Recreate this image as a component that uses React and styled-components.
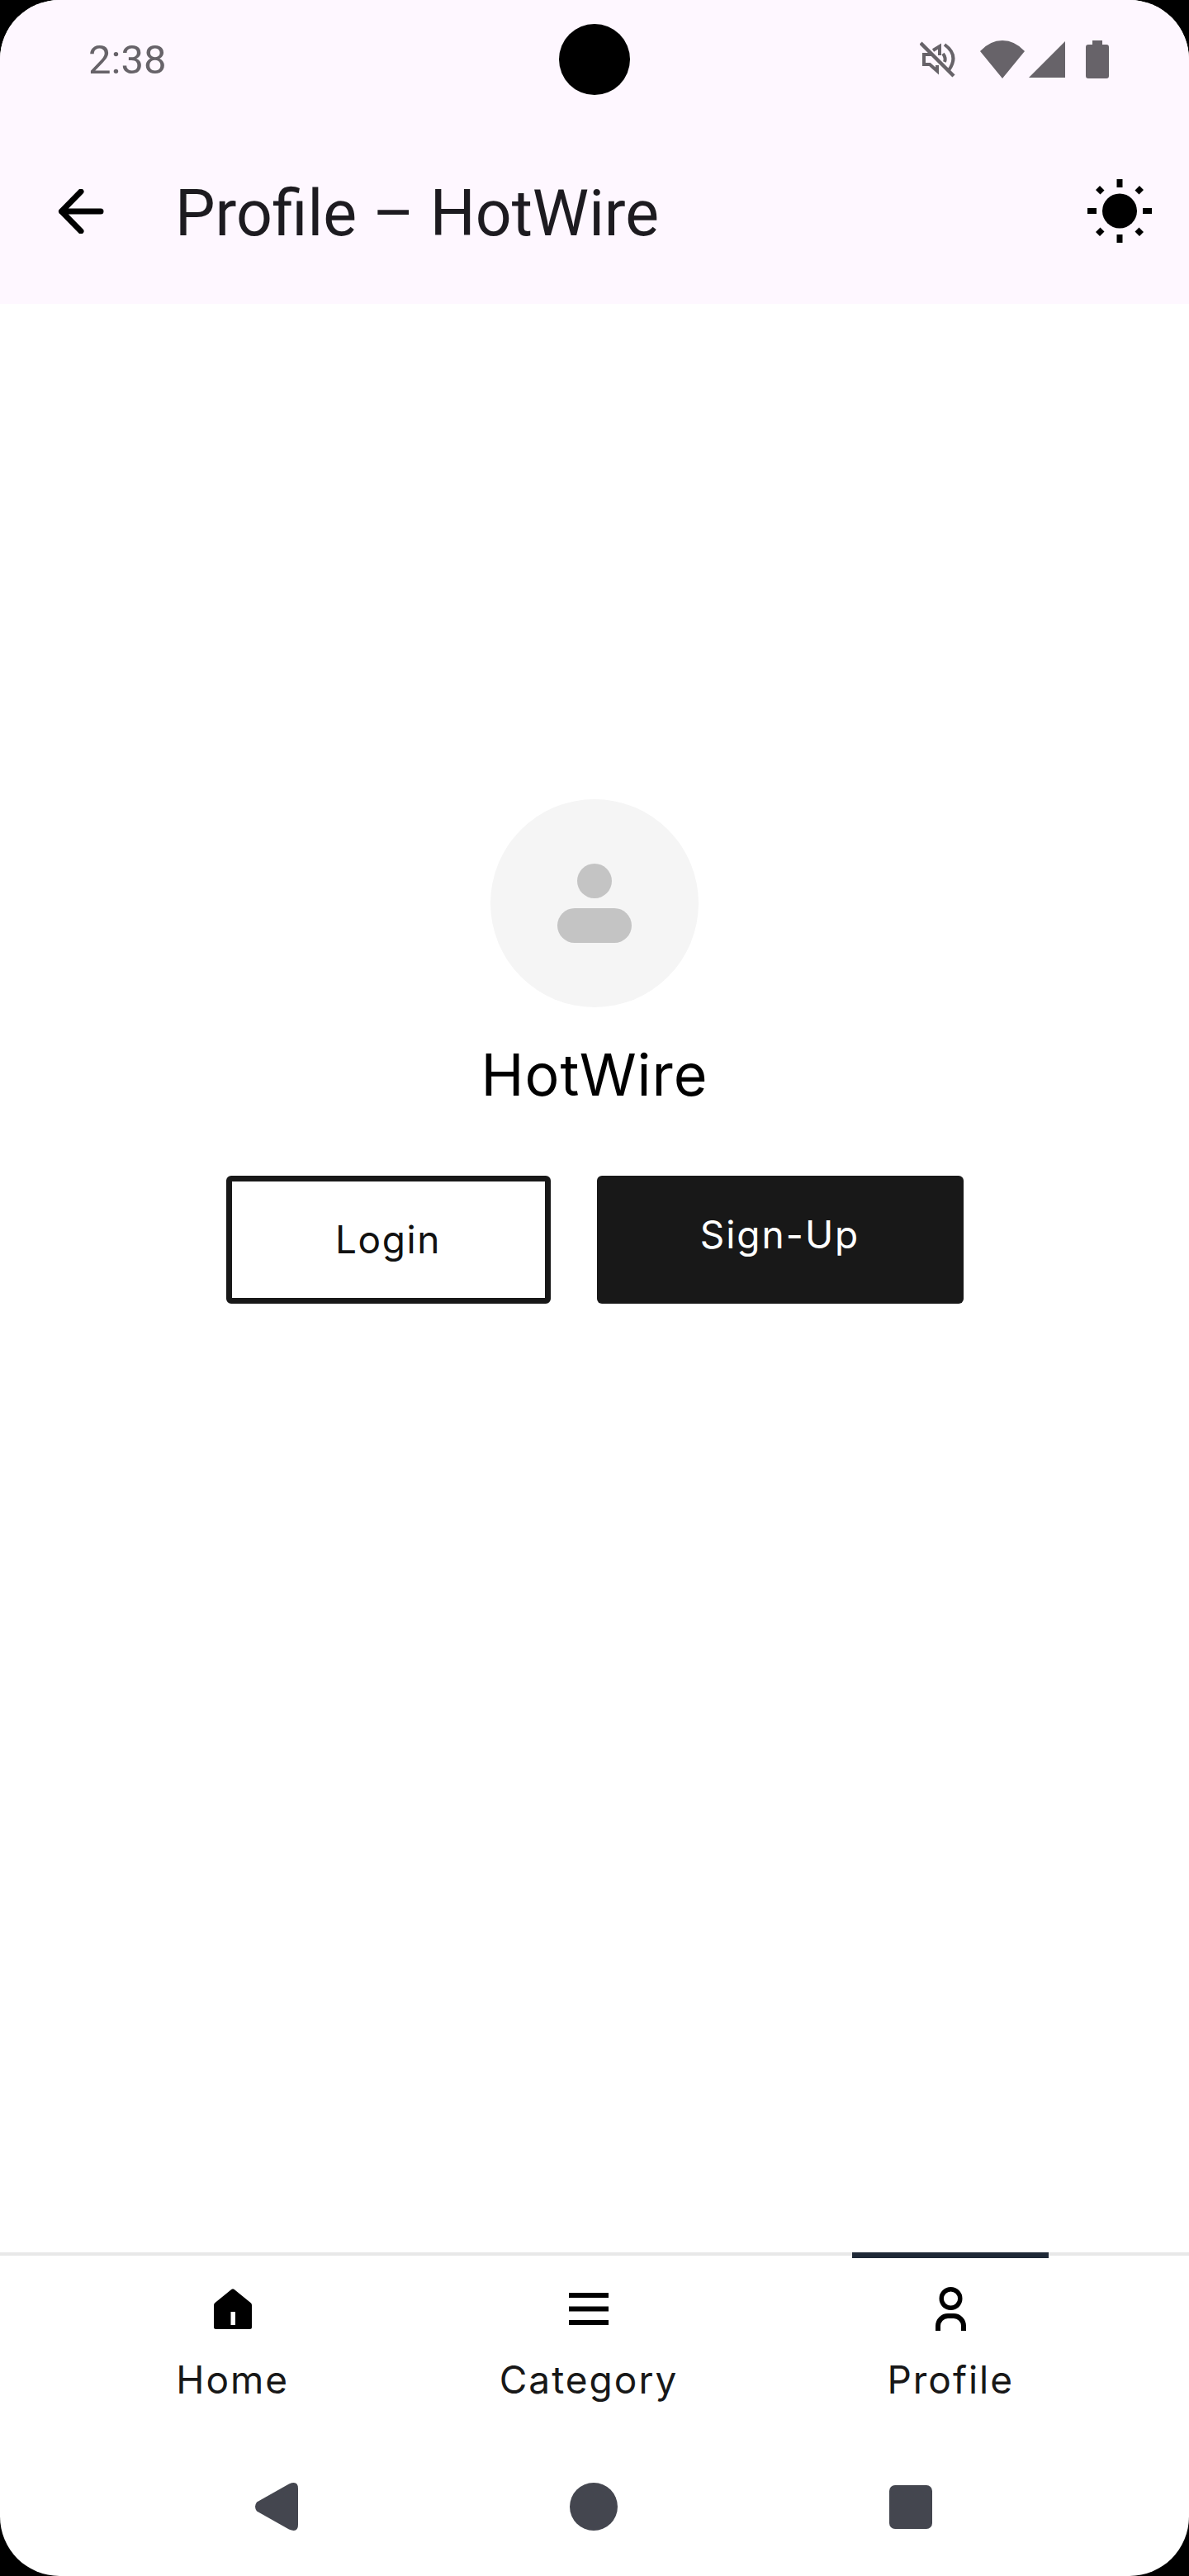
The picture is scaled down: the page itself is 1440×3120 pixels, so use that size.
import React from "react";
import styled, { createGlobalStyle } from "styled-components";

const GlobalStyle = createGlobalStyle`
  html, body {
    margin: 0;
    padding: 0;
    background: #000;
  }
`;

const tabs = [
  { label: "Home", width: 224, icon: <HomeIcon /> },
  { label: "Category", width: 299, icon: <MenuIcon /> },
  { label: "Profile", width: 238, icon: <PersonIcon />, active: true }
];

function HomeIcon() {
  return (
    <svg width="46" height="49" viewBox="0 0 46 49">
      <path
        fill="#000"
        fillRule="evenodd"
        d="M21.5 0.7 Q23 -0.3 24.5 0.7 L44.5 17 Q46 18 46 20 V46.5 Q46 49 43.5 49 H2.5 Q0 49 0 46.5 V20 Q0 18 1.5 17 Z M20.5 28 V44 H26 V28 Z"
      />
    </svg>
  );
}

function MenuIcon() {
  return (
    <svg width="48" height="39" viewBox="0 0 48 39">
      <path fill="#000" d="M0 0 H48 V6 H0 Z M0 16.5 H48 V22.5 H0 Z M0 33 H48 V39 H0 Z" />
    </svg>
  );
}

function PersonIcon() {
  return (
    <svg width="37" height="53" viewBox="0 0 37 53">
      <circle cx="18.5" cy="14" r="11.3" fill="none" stroke="#000" strokeWidth="5.4" />
      <path
        d="M3 53 V47 A12 12 0 0 1 15 35 H22 A12 12 0 0 1 34 47 V53"
        fill="none"
        stroke="#000"
        strokeWidth="6"
      />
    </svg>
  );
}

function MuteIcon() {
  return (
    <svg width="44" height="46" viewBox="0 0 44 46">
      <g fill="none" stroke="#676369" strokeWidth="4">
        <path d="M1 3 L41 43" strokeWidth="4.5" />
        <path d="M16 17 H5 V29 H12 L21 37 V30" />
        <path d="M16 12 L24 7 V18" />
        <path d="M28 16 Q32 21 30 26" />
        <path d="M30 5 Q48 18 35 36" />
      </g>
    </svg>
  );
}

function WifiIcon() {
  return (
    <svg width="54" height="46" viewBox="0 0 54 46">
      <path fill="#676369" d="M27 46 L0 13 Q12 0 27 0 Q42 0 54 13 Z" />
    </svg>
  );
}

function SignalIcon() {
  return (
    <svg width="44" height="44" viewBox="0 0 44 44">
      <path fill="#676369" d="M44 0 V44 H0 Z" />
    </svg>
  );
}

function BatteryIcon() {
  return (
    <svg width="28" height="46" viewBox="0 0 28 46">
      <path
        fill="#676369"
        d="M8 0 H20 V5 H25 Q28 5 28 8 V43 Q28 46 25 46 H3 Q0 46 0 43 V8 Q0 5 3 5 H8 Z"
      />
    </svg>
  );
}

function BackIcon() {
  return (
    <svg width="56" height="54" viewBox="0 0 56 54">
      <path
        d="M28 3 L4.5 27 L28 51 M4.5 27 H52"
        fill="none"
        stroke="#000"
        strokeWidth="7"
        strokeLinecap="round"
        strokeLinejoin="round"
      />
    </svg>
  );
}

function SunIcon() {
  return (
    <svg width="78" height="78" viewBox="0 0 78 78">
      <circle cx="39" cy="38.5" r="21" fill="#000" />
      <path
        fill="#000"
        d="M35.5 0 H42.5 V10 H35.5 Z M35.5 67 H42.5 V77 H35.5 Z M0 35 H11 V42 H0 Z M67 35 H78 V42 H67 Z M15 8 L20.5 13.5 L15.5 18.5 L10 13 Z M63 8 L68 13 L62.5 18.5 L57.5 13.5 Z M15.5 58.5 L20.5 63.5 L15 69 L10 64 Z M62.5 58.5 L68 64 L63 69 L57.5 63.5 Z"
      />
    </svg>
  );
}

function BackNavIcon() {
  return (
    <svg width="52" height="58" viewBox="0 0 52 58">
      <path
        fill="#44464f"
        d="M2 23.5 L41 1.5 Q52 -3 52 7 V51 Q52 61 41 56.5 L2 34.5 Q-2 29 2 23.5 Z"
      />
    </svg>
  );
}

const App = () => {
  return (
    <>
      <GlobalStyle />
      <Phone>
        <TopArea>
          <StatusBar>
            <Time>2:38</Time>
            <Camera />
            <StatusIcons>
              <MuteIcon />
              <WifiIcon />
              <SignalIcon />
              <BatteryIcon />
            </StatusIcons>
          </StatusBar>
          <AppBar>
            <BackIcon />
            <Title>Profile – HotWire</Title>
            <SunIcon />
          </AppBar>
        </TopArea>

        <Content>
          <Avatar>
            <AvatarHead />
            <AvatarBody />
          </Avatar>
          <UserName>HotWire</UserName>
          <Buttons>
            <LoginButton>Login</LoginButton>
            <SignUpButton>Sign-Up</SignUpButton>
          </Buttons>
        </Content>

        <BottomNav>
          {tabs.map(tab => (
            <Tab key={tab.label} $width={tab.width}>
              {tab.active && <ActiveBar />}
              <TabIcon>{tab.icon}</TabIcon>
              <TabLabel>{tab.label}</TabLabel>
            </Tab>
          ))}
        </BottomNav>

        <SystemNav>
          <BackNavIcon />
          <HomeDot />
          <RecentSquare />
        </SystemNav>
      </Phone>
    </>
  );
};

export default App;

const Phone = styled.div`
  width: 1440px;
  height: 3120px;
  display: flex;
  flex-direction: column;
  overflow: hidden;
  border-radius: 72px;
  background: #fff;
  font-family: "Inter", "Liberation Sans", sans-serif;
`;

const TopArea = styled.header`
  background: #fef7ff;
`;

const StatusBar = styled.div`
  height: 144px;
  display: grid;
  grid-template-columns: 1fr 86px 1fr;
  align-items: center;
  padding: 0 97px;
  box-sizing: border-box;
`;

const Time = styled.span`
  margin-left: 10px;
  font-family: "Roboto", sans-serif;
  font-size: 49px;
  line-height: 1;
  color: #676369;
`;

const Camera = styled.div`
  width: 86px;
  height: 86px;
  border-radius: 50%;
  background: #000;
`;

const StatusIcons = styled.div`
  display: flex;
  align-items: center;
  justify-content: flex-end;
  gap: 5px;

  svg:first-child {
    margin-right: 24px;
  }

  svg:last-child {
    margin-left: 20px;
  }
`;

const AppBar = styled.div`
  height: 224px;
  box-sizing: border-box;
  display: flex;
  align-items: center;
  padding: 0 45px 0 70px;
`;

const Title = styled.h1`
  flex: 1;
  margin: 0 0 0 86px;
  padding-top: 6px;
  font-family: "Roboto", sans-serif;
  font-size: 77px;
  font-weight: 400;
  line-height: 1;
  color: #1d1b20;
`;

const Content = styled.main`
  flex: 1;
  display: flex;
  flex-direction: column;
  align-items: center;
  padding-top: 600px;
`;

const Avatar = styled.div`
  width: 252px;
  height: 252px;
  border-radius: 50%;
  background: #f5f5f5;
  display: flex;
  flex-direction: column;
  align-items: center;
  justify-content: center;
  gap: 12px;
`;

const AvatarHead = styled.div`
  width: 42px;
  height: 42px;
  border-radius: 50%;
  background: #c4c4c4;
`;

const AvatarBody = styled.div`
  width: 90px;
  height: 42px;
  border-radius: 21px;
  background: #c4c4c4;
`;

const UserName = styled.div`
  margin-top: 40px;
  font-size: 70px;
  line-height: 84px;
  letter-spacing: 1px;
  color: #000;
`;

const Buttons = styled.div`
  display: flex;
  gap: 56px;
  margin-top: 80px;
`;

const LoginButton = styled.button`
  width: 393px;
  height: 155px;
  box-sizing: border-box;
  border: 7px solid #181818;
  border-radius: 6px;
  padding-bottom: 3px;
  background: #fff;
  color: #111;
  font-family: inherit;
  font-size: 46px;
  letter-spacing: 1.6px;
`;

const SignUpButton = styled.button`
  width: 444px;
  height: 155px;
  box-sizing: border-box;
  border: 0;
  border-radius: 6px;
  padding-bottom: 14px;
  background: #181818;
  color: #fff;
  font-family: inherit;
  font-size: 46px;
  letter-spacing: 2px;
`;

const BottomNav = styled.nav`
  flex: none;
  height: 208px;
  box-sizing: border-box;
  border-top: 4px solid #e8e8e8;
  display: flex;
  justify-content: space-evenly;
`;

const Tab = styled.div`
  position: relative;
  width: ${props => props.$width}px;
  display: flex;
  flex-direction: column;
  align-items: center;
`;

const ActiveBar = styled.div`
  position: absolute;
  top: -4px;
  left: 0;
  right: 0;
  height: 7px;
  background: #1f2937;
`;

const TabIcon = styled.div`
  height: 56px;
  margin-top: 36px;
  display: flex;
  align-items: center;
  justify-content: center;
`;

const TabLabel = styled.span`
  margin-top: 30px;
  font-size: 46px;
  line-height: 56px;
  letter-spacing: 2px;
  color: #181818;
`;

const SystemNav = styled.div`
  flex: none;
  height: 184px;
  box-sizing: border-box;
  padding: 16px 0 0 309px;
  display: flex;
  align-items: center;
  gap: 329px;
`;

const HomeDot = styled.div`
  width: 58px;
  height: 58px;
  border-radius: 50%;
  background: #44464f;
`;

const RecentSquare = styled.div`
  width: 52px;
  height: 53px;
  border-radius: 7px;
  background: #44464f;
`;
